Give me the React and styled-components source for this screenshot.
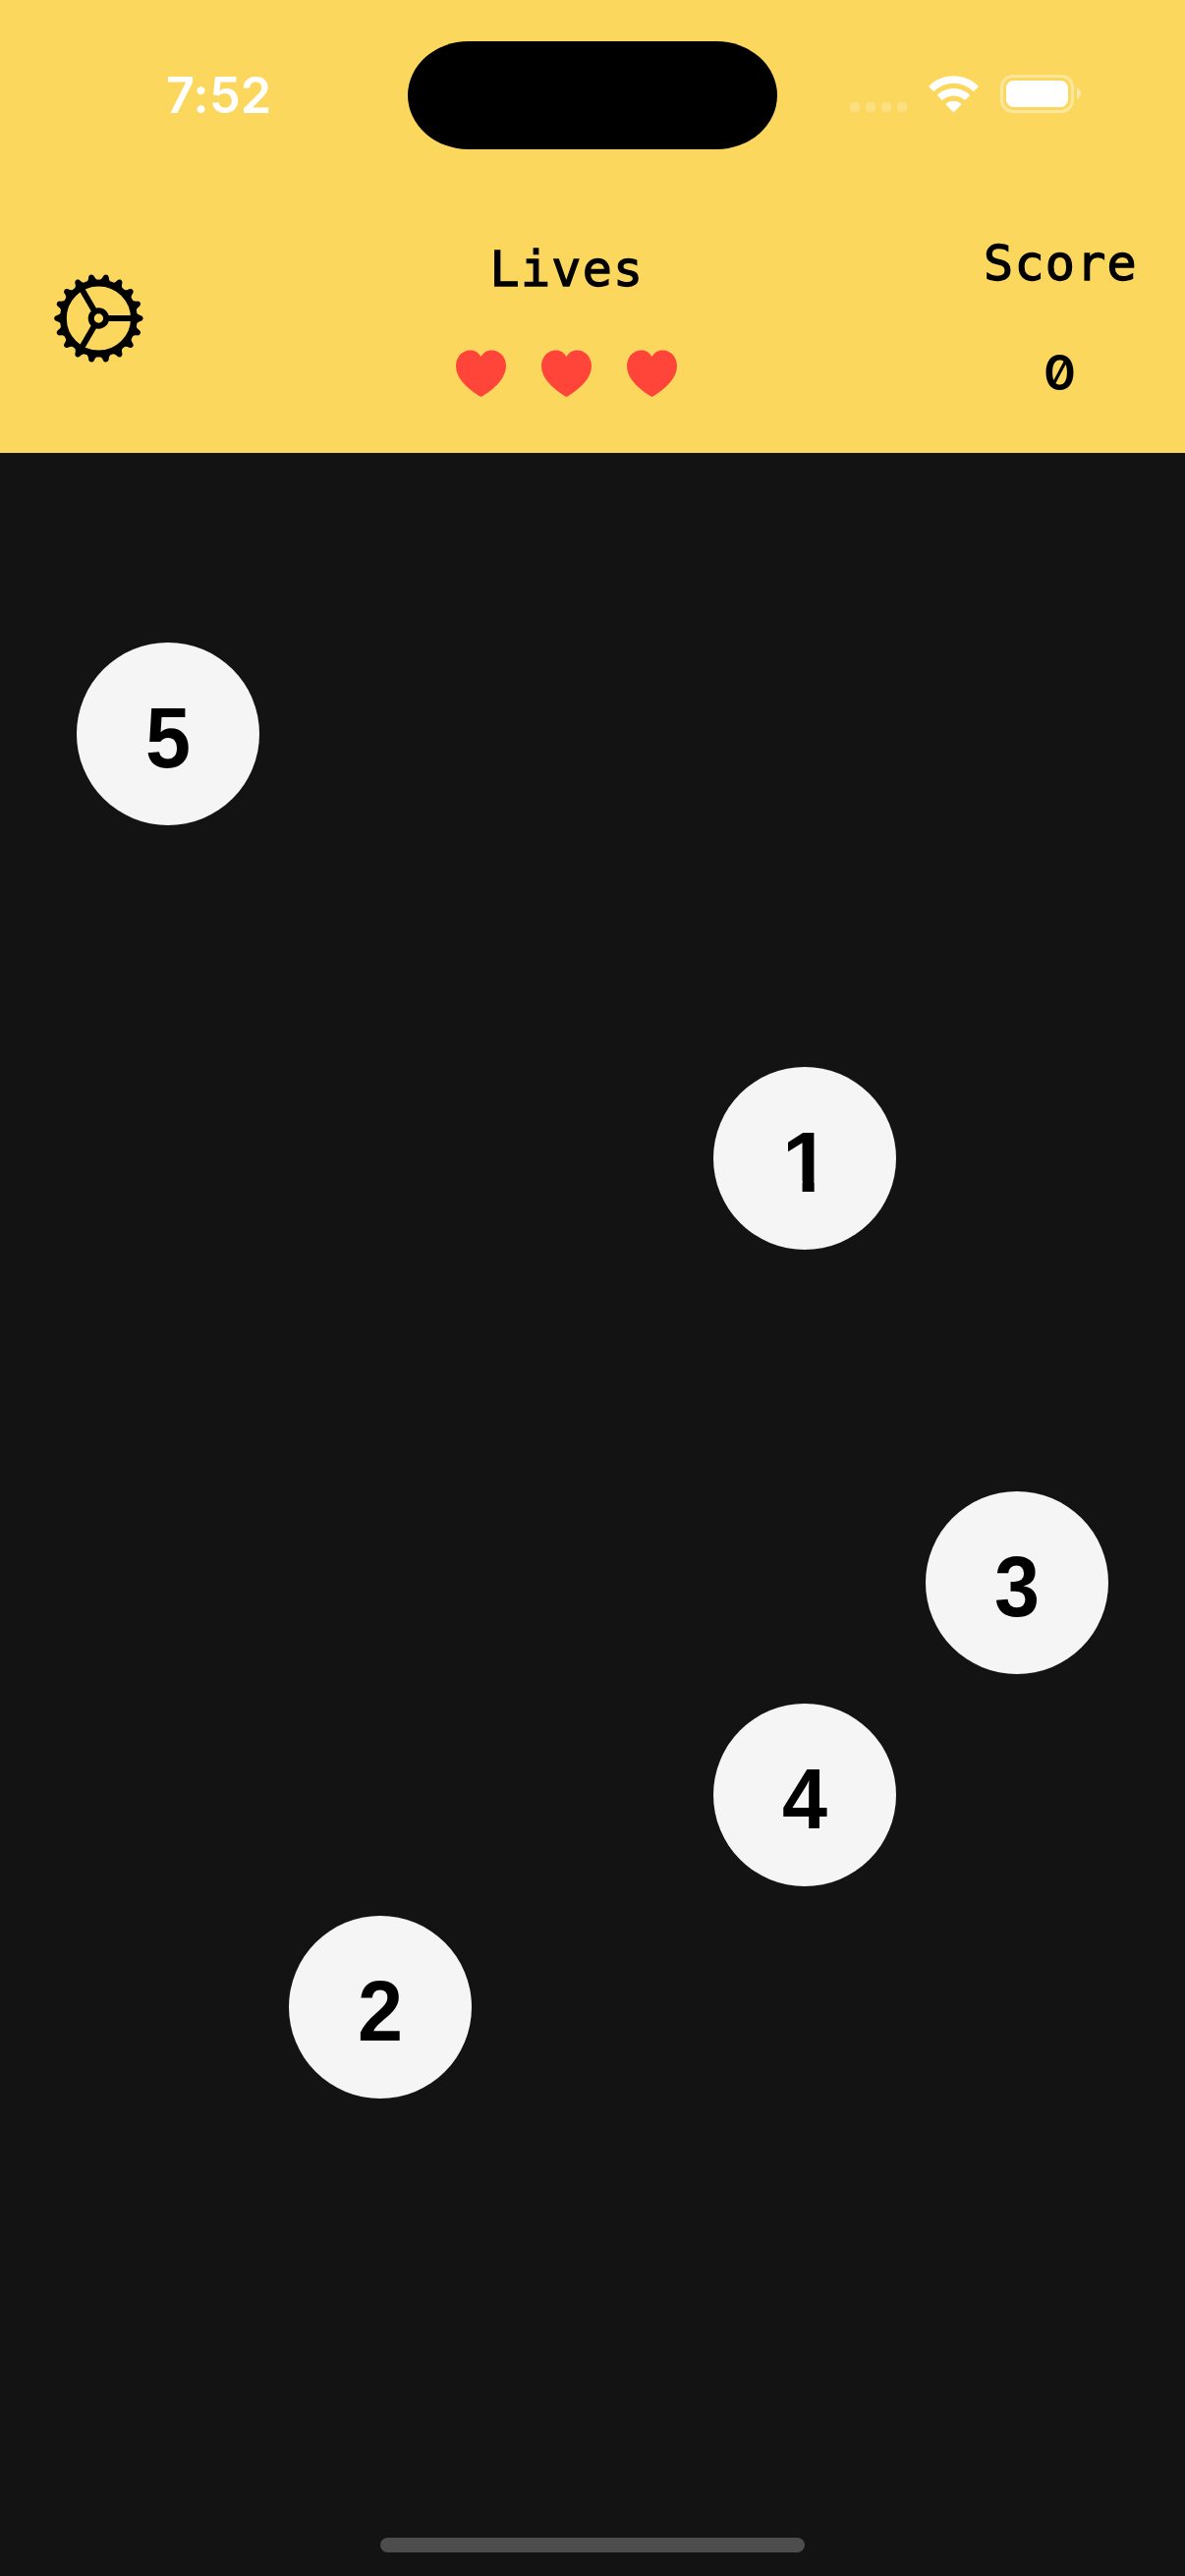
import React from 'react';
import styled, { createGlobalStyle, css } from 'styled-components';

const GlobalStyle = createGlobalStyle`
  * { box-sizing: border-box; }
  body { margin: 0; background: #131313; }
`;

const Screen = styled.div`
  width: 1206px;
  height: 2622px;
  display: flex;
  flex-direction: column;
  background: #131313;
  overflow: hidden;
`;

const Header = styled.header`
  height: 461px;
  background: #fcd75e;
  display: flex;
  flex-direction: column;
`;

const StatusBar = styled.div`
  height: 192px;
  padding-top: 42px;
  display: grid;
  grid-template-columns: 415px 376px 415px;
  align-items: start;
`;

const Time = styled.div`
  padding: 25px 0 0 169px;
  font: 600 50.5px/60px Inter, sans-serif;
  letter-spacing: 0.2px;
  color: #fff;
`;

const Island = styled.div`
  height: 110px;
  border-radius: 62px / 55px;
  background: #000;
`;

const StatusIcons = styled.div`
  display: flex;
  align-items: flex-end;
  height: 74px;
  padding-left: 74px;
`;

const Signal = styled.div`
  display: flex;
  gap: 6px;
  margin: 0 69px 2px 0;
  width: 11px;
`;

const SignalDot = styled.i`
  flex: 0 0 10px;
  height: 10px;
  border-radius: 3px;
  background: rgba(255, 255, 255, 0.2);
`;

const WifiIcon = styled.svg`
  width: 51px;
  height: 38px;
  margin: 0 22px 1px 0;
`;

const BatteryIcon = styled.svg`
  width: 84px;
  height: 39px;
  margin-bottom: 1px;
`;

const Toolbar = styled.div`
  flex: 1;
  display: grid;
  grid-template-columns: 201px 750px 255px;
`;

const GearButton = styled.button`
  width: 92px;
  height: 92px;
  margin: 86px 0 0 54px;
  padding: 0;
  border: 0;
  background: none;
  svg { display: block; }
`;

const Stat = styled.section`
  display: flex;
  flex-direction: column;
  align-items: center;
  padding-top: ${(p) => p.$top}px;
`;

const Label = styled.div`
  padding-left: 2px;
  font: 400 50px/60px "DejaVu Sans Mono", monospace;
  letter-spacing: 1.3px;
  -webkit-text-stroke: 1.3px #000;
  color: #000;
`;

const Hearts = styled.div`
  display: flex;
  gap: 36px;
  margin-top: 52px;
  svg { display: block; }
`;

const ScoreValue = styled.div`
  margin-top: 51px;
  font: 600 50px/60px Inter, sans-serif;
  font-feature-settings: "zero" 1;
  color: #000;
`;

const Board = styled.main`
  flex: 1;
  display: grid;
  grid-template-columns: repeat(5, 216px);
  grid-template-rows: repeat(7, 216px);
  justify-content: center;
  justify-items: center;
  align-items: center;
  padding-top: 178px;
`;

const Ball = styled.button`
  grid-column: ${(p) => p.$col};
  grid-row: ${(p) => p.$row};
  width: 186px;
  height: 186px;
  padding: 53px 0 0;
  border: 0;
  border-radius: 50%;
  background: #f5f5f5;
  color: #000;
  display: flex;
  justify-content: center;
  align-items: flex-start;
`;

/* The numeral one is trimmed to a plain stem, without its foot. */
const Digit = styled.span`
  display: block;
  font: 700 88px/88px "Liberation Sans", Arial, sans-serif;
  transform: translateX(-0.5px) scaleX(0.94);
  ${(p) => p.$plainStem && css`
    transform: translateX(1.5px);
    clip-path: polygon(0 0, 0.371em 0, 0.371em 1em, 0.2334em 1em, 0.2334em 0.72em, 0 0.72em);
  `}
`;

const HomeArea = styled.footer`
  height: 39px;
  display: flex;
  justify-content: center;
`;

const HomeIndicator = styled.div`
  width: 432px;
  height: 15px;
  border-radius: 8px;
  background: #4d4d4d;
`;

const teeth = Array.from({ length: 18 }, (_, i) => i * 20);

function Gear() {
  return (
    <svg width="92" height="92" viewBox="-46.4 -46 92 92">
      <circle r="36" fill="none" stroke="#000" strokeWidth="6.8" />
      {teeth.map((a) => (
        <path key={a} transform={`rotate(${a})`} d="M37 -6.5 C39.500 -4.500 40.500 -3.500 42.500 -3 C46.100 -2.200 46.100 2.200 42.500 3 C40.500 3.500 39.500 4.500 37 6.500 Z" />
      ))}
      {[0, 120, 240].map((a) => (
        <path key={a} transform={`rotate(${a})`} d="M8 -3H35V3H8Z" />
      ))}
      <circle r="7.7" fill="none" stroke="#000" strokeWidth="6" />
    </svg>
  );
}

function Heart() {
  return (
    <svg width="51" height="48" viewBox="0 0 51 48">
      <path fill="#ff453a" d="M25.5 47.8C24.8 47.8 23.8 47.1 22.9 46.500C9.5 38.1 0 27.5 0 16.8C0 7.4 6.4 0.6 14.6 0.6C19.6 0.6 23.3 3.3 25.5 7.2C27.7 3.3 31.4 0.6 36.4 0.6C44.6 0.6 51 7.4 51 16.8C51 27.5 41.5 38.1 28.1 46.5C27.2 47.1 26.2 47.8 25.5 47.8Z" />
    </svg>
  );
}

const balls = [
  { n: 5, col: 1, row: 1 },
  { n: 1, col: 4, row: 3 },
  { n: 3, col: 5, row: 5 },
  { n: 4, col: 4, row: 6 },
  { n: 2, col: 2, row: 7 },
];

export default function App() {
  return (
    <Screen>
      <GlobalStyle />
      <Header>
        <StatusBar>
          <Time>7:52</Time>
          <Island />
          <StatusIcons>
            <Signal>
              <SignalDot /><SignalDot /><SignalDot /><SignalDot />
            </Signal>
            <WifiIcon viewBox="0 0 51 38" fill="#fff">
              <path d="M25.5 0.2C35 0.2 43.800 3.900 50.200 10.300C50.700 10.800 50.700 11.400 50.200 11.900L46.300 15.600C45.900 16 45.300 16 44.900 15.600C39.700 10.600 32.800 7.800 25.500 7.800C18.200 7.800 11.300 10.600 6.100 15.600C5.700 16 5.100 16 4.700 15.600L0.800 11.900C0.300 11.400 0.300 10.800 0.800 10.300C7.200 3.900 16 0.200 25.500 0.200Z" />
              <path d="M25.500 12.900C31.600 12.900 37.200 15.200 41.500 19.100C42 19.600 42 20.200 41.500 20.700L37.700 24.500C37.300 24.900 36.700 24.900 36.300 24.500C33.300 21.900 29.600 20.500 25.500 20.500C21.400 20.500 17.700 21.900 14.700 24.500C14.300 24.900 13.700 24.900 13.300 24.500L9.500 20.700C9 20.200 9 19.600 9.500 19.100C13.800 15.200 19.400 12.900 25.500 12.900Z" />
              <path d="M25.500 25.700C28.300 25.700 30.900 26.700 32.900 28.300C33.400 28.800 33.400 29.400 32.900 29.900L26.200 36.700C25.800 37.100 25.200 37.100 24.800 36.700L18.100 29.900C17.600 29.400 17.600 28.800 18.100 28.300C20.100 26.700 22.700 25.700 25.500 25.700Z" />
            </WifiIcon>
            <BatteryIcon viewBox="0 0 84 39">
              <rect x="1.500" y="1.500" width="72" height="36" rx="11.500" fill="none" stroke="#fff" strokeOpacity="0.4" strokeWidth="3" />
              <rect x="6" y="6" width="63" height="27" rx="7.500" fill="#fff" />
              <path d="M78 13.500C80.500 14.500 82 16.800 82 19.300C82 21.800 80.500 24.100 78 25.200Z" fill="#fff" fillOpacity="0.45" />
            </BatteryIcon>
          </StatusIcons>
        </StatusBar>
        <Toolbar>
          <GearButton aria-label="Settings"><Gear /></GearButton>
          <Stat $top={52}>
            <Label>Lives</Label>
            <Hearts><Heart /><Heart /><Heart /></Hearts>
          </Stat>
          <Stat $top={46}>
            <Label>Score</Label>
            <ScoreValue>0</ScoreValue>
          </Stat>
        </Toolbar>
      </Header>
      <Board>
        {balls.map((b) => (
          <Ball key={b.n} $col={b.col} $row={b.row}>
            <Digit $plainStem={b.n === 1}>{b.n}</Digit>
          </Ball>
        ))}
      </Board>
      <HomeArea><HomeIndicator /></HomeArea>
    </Screen>
  );
}
